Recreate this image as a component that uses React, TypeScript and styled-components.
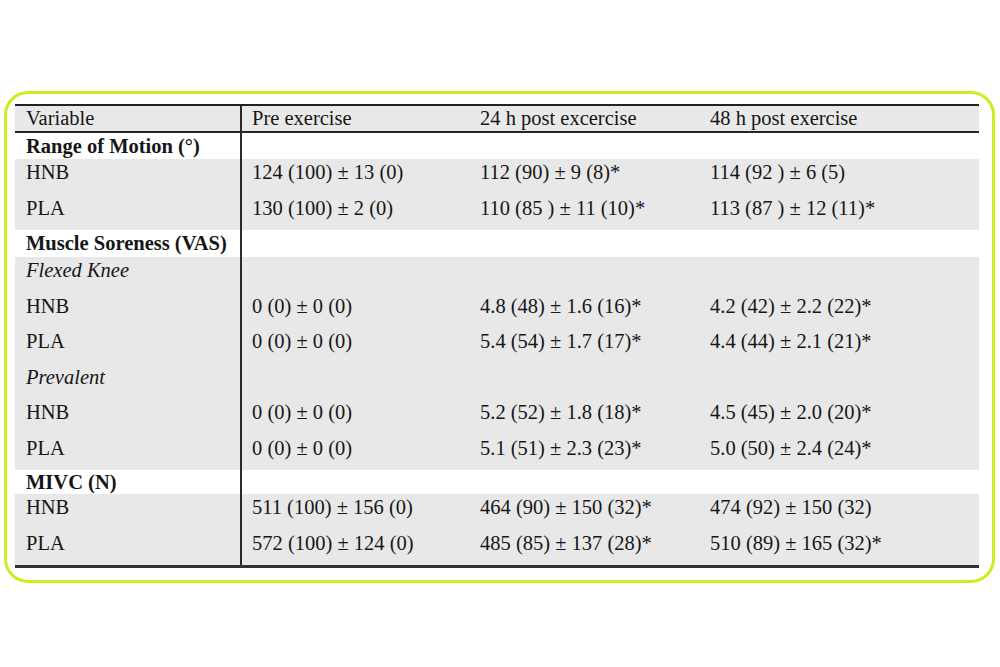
import React from "react";
import styled, { createGlobalStyle } from "styled-components";

const Global = createGlobalStyle`
  html, body { margin: 0; padding: 0; background: #ffffff; }
  body { font-family: "Liberation Serif", "Times New Roman", serif; color: #161616; }
`;

const Page = styled.div`
  padding: 91px 5px 0 4px;
`;

const Frame = styled.div`
  border: 3px solid #c8f01e;
  border-radius: 24px;
  padding: 10px 13px 12px 8px;
`;

const Table = styled.div`
  border-top: 2px solid #222222;
  border-bottom: 3px solid #333333;
  font-size: 20.5px;
`;

type RowKind = "header" | "section" | "data";

const Row = styled.div<{ $kind: RowKind; $shaded?: boolean; $h: number }>`
  display: grid;
  grid-template-columns: 227px 228px 230px 1fr;
  height: ${(p) => p.$h}px;
  background: ${(p) => (p.$kind === "header" ? "#e9e9e9" : p.$shaded ? "#e8e8e8" : "#ffffff")};
  border-bottom: ${(p) => (p.$kind === "header" ? "2px solid #262626" : "none")};
  line-height: ${(p) => (p.$kind === "data" ? "26px" : `${p.$h}px`)};
`;

const Cell = styled.div<{ $first?: boolean; $bold?: boolean; $italic?: boolean }>`
  padding-left: ${(p) => (p.$first ? "11px" : "10px")};
  border-right: ${(p) => (p.$first ? "2px solid #2a2a2a" : "none")};
  font-weight: ${(p) => (p.$bold ? 700 : 400)};
  font-style: ${(p) => (p.$italic ? "italic" : "normal")};
  white-space: nowrap;
`;

type Item =
  | { kind: "header"; cells: string[]; h: number }
  | { kind: "section"; label: string; h: number }
  | { kind: "data"; cells: string[]; italic?: boolean };

const rows: Item[] = [
  { kind: "header", cells: ["Variable", "Pre exercise", "24 h post excercise", "48 h post exercise"], h: 25 },
  { kind: "section", label: "Range of Motion (°)", h: 26 },
  { kind: "data", cells: ["HNB", "124 (100) ± 13 (0)", "112 (90) ± 9 (8)*", "114 (92 ) ± 6 (5)"] },
  { kind: "data", cells: ["PLA", "130 (100) ± 2 (0)", "110 (85 ) ± 11 (10)*", "113 (87 ) ± 12 (11)*"] },
  { kind: "section", label: "Muscle Soreness (VAS)", h: 27 },
  { kind: "data", cells: ["Flexed Knee", "", "", ""], italic: true },
  { kind: "data", cells: ["HNB", "0 (0) ± 0 (0)", "4.8 (48) ± 1.6 (16)*", "4.2 (42) ± 2.2 (22)*"] },
  { kind: "data", cells: ["PLA", "0 (0) ± 0 (0)", "5.4 (54) ± 1.7 (17)*", "4.4 (44) ± 2.1 (21)*"] },
  { kind: "data", cells: ["Prevalent", "", "", ""], italic: true },
  { kind: "data", cells: ["HNB", "0 (0) ± 0 (0)", "5.2 (52) ± 1.8 (18)*", "4.5 (45) ± 2.0 (20)*"] },
  { kind: "data", cells: ["PLA", "0 (0) ± 0 (0)", "5.1 (51) ± 2.3 (23)*", "5.0 (50) ± 2.4 (24)*"] },
  { kind: "section", label: "MIVC (N)", h: 24 },
  { kind: "data", cells: ["HNB", "511 (100) ± 156 (0)", "464 (90) ± 150 (32)*", "474 (92) ± 150 (32)"] },
  { kind: "data", cells: ["PLA", "572 (100) ± 124 (0)", "485 (85) ± 137 (28)*", "510 (89) ± 165 (32)*"] },
];

export default function App() {
  return (
    <>
      <Global />
      <Page>
        <Frame>
          <Table>
            {rows.map((r, i) => {
              if (r.kind === "header") {
                return (
                  <Row key={i} $kind="header" $h={r.h}>
                    {r.cells.map((c, j) => (
                      <Cell key={j} $first={j === 0}>{c}</Cell>
                    ))}
                  </Row>
                );
              }
              if (r.kind === "section") {
                return (
                  <Row key={i} $kind="section" $h={r.h}>
                    <Cell $first $bold>{r.label}</Cell>
                    <Cell />
                    <Cell />
                    <Cell />
                  </Row>
                );
              }
              return (
                <Row key={i} $kind="data" $shaded $h={35.5}>
                  {r.cells.map((c, j) => (
                    <Cell key={j} $first={j === 0} $italic={j === 0 && r.italic}>{c}</Cell>
                  ))}
                </Row>
              );
            })}
          </Table>
        </Frame>
      </Page>
    </>
  );
}
